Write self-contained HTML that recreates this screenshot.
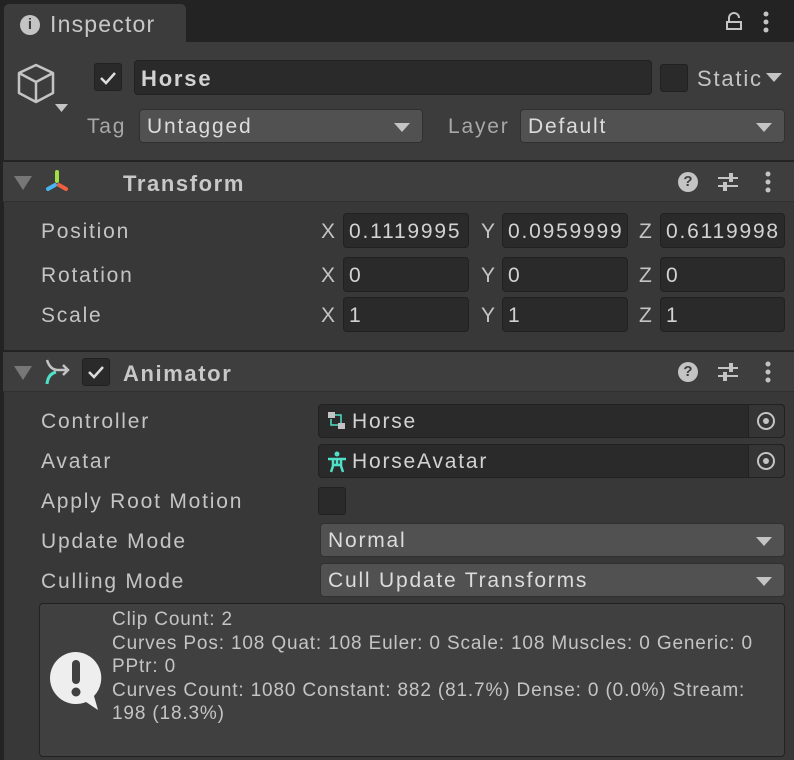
<!DOCTYPE html>
<html><head><style>
*{box-sizing:border-box;margin:0;padding:0}
body{width:794px;height:760px;background:#383838;font-family:"Liberation Sans",sans-serif;color:#c4c4c4;position:relative;overflow:hidden;font-size:21px;letter-spacing:1.8px}
.a{position:absolute}
.fld{position:absolute;background:#2a2a2a;border:1px solid #212121;border-radius:4px;color:#d2d2d2;padding-left:5px;line-height:32px;overflow:hidden;white-space:nowrap}
.dd{position:absolute;background:#515151;border:1px solid #303030;border-radius:4px;color:#dcdcdc;padding-left:7px;line-height:32px}
.dd:after{content:"";position:absolute;right:12px;top:13px;border-left:8px solid transparent;border-right:8px solid transparent;border-top:9px solid #c4c4c4}
.cb{position:absolute;width:28px;height:28px;background:#2a2a2a;border:1px solid #212121;border-radius:3px}
.hdr{position:absolute;left:3px;right:0;height:42px;background:#3e3e3e;border-top:2px solid #232323;border-bottom:1px solid #303030}
.lbl{position:absolute;left:41px}
.ax{position:absolute;color:#c4c4c4}
.tri{position:absolute;left:14px;border-left:9px solid transparent;border-right:9px solid transparent;border-top:14px solid #777}
</style></head><body>
<div class="a" style="left:0;top:0;width:794px;height:42px;background:#232323"></div>
<div class="a" style="left:0;top:0;width:4px;height:760px;background:#232323"></div>
<div class="a" style="left:4px;top:4px;width:182px;height:40px;background:#3c3c3c;border-radius:5px 5px 0 0"></div>
<div class="a" style="left:20px;top:15px;width:20px;height:20px;border-radius:50%;background:#c4c4c4;color:#3c3c3c;font-size:15px;font-weight:bold;text-align:center;line-height:20px;letter-spacing:0">i</div>
<div class="a" style="left:50px;top:11px;font-size:23px;color:#c8c8c8;letter-spacing:1.2px">Inspector</div>
<svg class="a" style="left:724px;top:10px" width="22" height="22"><path d="M3 12h14v7H3z M5 12V8a5 5 0 0 1 10 0" fill="none" stroke="#c4c4c4" stroke-width="2"/></svg>
<svg class="a" style="left:760px;top:10px" width="14" height="24"><circle cx="6" cy="4" r="2.5" fill="#c4c4c4"/><circle cx="6" cy="12" r="2.5" fill="#c4c4c4"/><circle cx="6" cy="20" r="2.5" fill="#c4c4c4"/></svg>
<div class="a" style="left:4px;top:42px;width:790px;height:118px;background:#3c3c3c"></div>
<svg class="a" style="left:14px;top:62px" width="60" height="54"><path d="M22 3 L39 11 L39 31 L22 40 L5 31 L5 11 Z M5 11 L22 20 L39 11 M22 20 L22 40" fill="none" stroke="#c4c4c4" stroke-width="2.5" stroke-linejoin="round"/><path d="M41 42h13l-6.5 8z" fill="#c4c4c4"/></svg>
<div class="cb" style="left:94px;top:63px"></div>
<svg class="a" style="left:98px;top:68px" width="20" height="20"><path d="M3 10l5 5 9-10" fill="none" stroke="#ddd" stroke-width="2.5"/></svg>
<div class="fld" style="left:134px;top:60px;width:518px;height:35px;font-weight:bold;font-size:22px;padding-left:6px;line-height:36px">Horse</div>
<div class="cb" style="left:660px;top:64px"></div>
<div class="a" style="left:697px;top:66px;font-size:22px">Static</div>
<div class="a" style="left:766px;top:73px;border-left:8px solid transparent;border-right:8px solid transparent;border-top:9px solid #c4c4c4"></div>
<div class="a" style="left:87px;top:115px;color:#a8a8a8">Tag</div>
<div class="dd" style="left:139px;top:109px;width:284px;height:34px;line-height:34px">Untagged</div>
<div class="a" style="left:448px;top:115px;color:#a8a8a8">Layer</div>
<div class="dd" style="left:520px;top:109px;width:265px;height:34px;line-height:34px">Default</div>

<div class="hdr" style="top:160px"></div>
<div class="tri" style="top:176px"></div>
<svg class="a" style="left:44px;top:168px" width="30" height="30"><path d="M13 4v9" stroke="#a0e040" stroke-width="4" stroke-linecap="round"/><path d="M11 17l-7 4" stroke="#4ab4f0" stroke-width="4" stroke-linecap="round"/><path d="M15 17l7 4" stroke="#f06040" stroke-width="4" stroke-linecap="round"/></svg>
<div class="a" style="left:123px;top:171px;font-weight:bold;font-size:22px;color:#c8c8c8;letter-spacing:1.6px">Transform</div>
<div class="a" style="left:678px;top:172px;width:20px;height:20px;border-radius:50%;background:#c4c4c4;color:#3e3e3e;font-weight:bold;font-size:15px;text-align:center;line-height:20px;letter-spacing:0">?</div>
<svg class="a" style="left:716px;top:170px" width="24" height="24"><path d="M2 8h20M2 16h20" stroke="#c4c4c4" stroke-width="2"/><rect x="13" y="3" width="4" height="9" fill="#c4c4c4"/><rect x="7" y="12" width="4" height="9" fill="#c4c4c4"/></svg>
<svg class="a" style="left:762px;top:170px" width="12" height="24"><circle cx="6" cy="4" r="2.5" fill="#c4c4c4"/><circle cx="6" cy="12" r="2.5" fill="#c4c4c4"/><circle cx="6" cy="20" r="2.5" fill="#c4c4c4"/></svg>

<div class="lbl" style="top:220px">Position</div>
<div class="lbl" style="top:264px">Rotation</div>
<div class="lbl" style="top:304px">Scale</div>
<div class="ax" style="left:321px;top:220px">X</div><div class="fld" style="left:343px;top:213px;width:126px;height:35px;line-height:35px">0.1119995</div>
<div class="ax" style="left:481px;top:220px">Y</div><div class="fld" style="left:502px;top:213px;width:126px;height:35px;line-height:35px">0.0959999</div>
<div class="ax" style="left:639px;top:220px">Z</div><div class="fld" style="left:660px;top:213px;width:125px;height:35px;line-height:35px">0.6119998</div>
<div class="ax" style="left:321px;top:264px">X</div><div class="fld" style="left:343px;top:257px;width:126px;height:35px;line-height:35px">0</div>
<div class="ax" style="left:481px;top:264px">Y</div><div class="fld" style="left:502px;top:257px;width:126px;height:35px;line-height:35px">0</div>
<div class="ax" style="left:639px;top:264px">Z</div><div class="fld" style="left:660px;top:257px;width:125px;height:35px;line-height:35px">0</div>
<div class="ax" style="left:321px;top:304px">X</div><div class="fld" style="left:343px;top:297px;width:126px;height:35px;line-height:35px">1</div>
<div class="ax" style="left:481px;top:304px">Y</div><div class="fld" style="left:502px;top:297px;width:126px;height:35px;line-height:35px">1</div>
<div class="ax" style="left:639px;top:304px">Z</div><div class="fld" style="left:660px;top:297px;width:125px;height:35px;line-height:35px">1</div>

<div class="hdr" style="top:350px"></div>
<div class="tri" style="top:366px"></div>
<svg class="a" style="left:44px;top:358px" width="30" height="30"><path d="M3 26 Q4 16 12 14" fill="none" stroke="#50e0c8" stroke-width="3"/><path d="M3 2 Q6 12 14 12 H24 M19 7l5 5-5 5" fill="none" stroke="#c4c4c4" stroke-width="2.5"/></svg>
<div class="cb" style="left:82px;top:358px"></div>
<svg class="a" style="left:86px;top:362px" width="20" height="20"><path d="M3 10l5 5 9-10" fill="none" stroke="#ddd" stroke-width="2.5"/></svg>
<div class="a" style="left:123px;top:361px;font-weight:bold;font-size:22px;color:#c8c8c8;letter-spacing:1.6px">Animator</div>
<div class="a" style="left:678px;top:362px;width:20px;height:20px;border-radius:50%;background:#c4c4c4;color:#3e3e3e;font-weight:bold;font-size:15px;text-align:center;line-height:20px;letter-spacing:0">?</div>
<svg class="a" style="left:716px;top:360px" width="24" height="24"><path d="M2 8h20M2 16h20" stroke="#c4c4c4" stroke-width="2"/><rect x="13" y="3" width="4" height="9" fill="#c4c4c4"/><rect x="7" y="12" width="4" height="9" fill="#c4c4c4"/></svg>
<svg class="a" style="left:762px;top:360px" width="12" height="24"><circle cx="6" cy="4" r="2.5" fill="#c4c4c4"/><circle cx="6" cy="12" r="2.5" fill="#c4c4c4"/><circle cx="6" cy="20" r="2.5" fill="#c4c4c4"/></svg>

<div class="lbl" style="top:410px">Controller</div>
<div class="lbl" style="top:450px">Avatar</div>
<div class="lbl" style="top:490px">Apply Root Motion</div>
<div class="lbl" style="top:530px">Update Mode</div>
<div class="lbl" style="top:570px">Culling Mode</div>
<div class="fld" style="left:318px;top:404px;width:467px;height:34px;padding-left:33px;line-height:34px">Horse</div>
<svg class="a" style="left:327px;top:411px" width="20" height="20"><rect x="1" y="1" width="7" height="6" fill="#c4c4c4"/><rect x="11" y="12" width="7" height="6" fill="#c4c4c4"/><path d="M4 8v6h7M8 4h6v8" fill="none" stroke="#50e0c8" stroke-width="1.5"/></svg>
<div class="a" style="left:748px;top:405px;width:36px;height:32px;background:#353535;border-left:1px solid #222;border-radius:0 4px 4px 0"></div>
<div class="a" style="left:757px;top:412px;width:18px;height:18px;border:2px solid #c4c4c4;border-radius:50%"></div>
<div class="a" style="left:763px;top:418px;width:6px;height:6px;background:#c4c4c4;border-radius:50%"></div>
<div class="fld" style="left:318px;top:444px;width:467px;height:34px;padding-left:33px;line-height:34px">HorseAvatar</div>
<svg class="a" style="left:326px;top:451px" width="22" height="22"><circle cx="11" cy="3" r="2.5" fill="#50e0c8"/><path d="M2 8h18M11 7v7M7 8v7l-2 6M15 8v7l2 6M7 14h8" fill="none" stroke="#50e0c8" stroke-width="2.5"/></svg>
<div class="a" style="left:748px;top:445px;width:36px;height:32px;background:#353535;border-left:1px solid #222;border-radius:0 4px 4px 0"></div>
<div class="a" style="left:757px;top:452px;width:18px;height:18px;border:2px solid #c4c4c4;border-radius:50%"></div>
<div class="a" style="left:763px;top:458px;width:6px;height:6px;background:#c4c4c4;border-radius:50%"></div>
<div class="cb" style="left:318px;top:487px"></div>
<div class="dd" style="left:320px;top:523px;width:465px;height:34px;line-height:34px">Normal</div>
<div class="dd" style="left:320px;top:563px;width:465px;height:34px;line-height:34px">Cull Update Transforms</div>

<div class="a" style="left:39px;top:603px;width:746px;height:154px;background:#404040;border:1px solid #222;border-radius:4px"></div>
<svg class="a" style="left:49px;top:650px" width="56" height="62"><path d="M27 2a26 26 0 1 0 10 50l12 8-4-14A26 26 0 0 0 27 2z" fill="#eeeeee"/><rect x="23" y="10" width="8" height="24" rx="4" fill="#404040"/><circle cx="27" cy="42" r="4.5" fill="#404040"/></svg>
<div class="a" style="left:112px;top:608px;font-size:19px;letter-spacing:0.85px;line-height:23.5px;color:#c4c4c4;width:680px;white-space:nowrap">Clip Count: 2<br>Curves Pos: 108 Quat: 108 Euler: 0 Scale: 108 Muscles: 0 Generic: 0<br>PPtr: 0<br>Curves Count: 1080 Constant: 882 (81.7%) Dense: 0 (0.0%) Stream:<br>198 (18.3%)</div>
</body></html>
